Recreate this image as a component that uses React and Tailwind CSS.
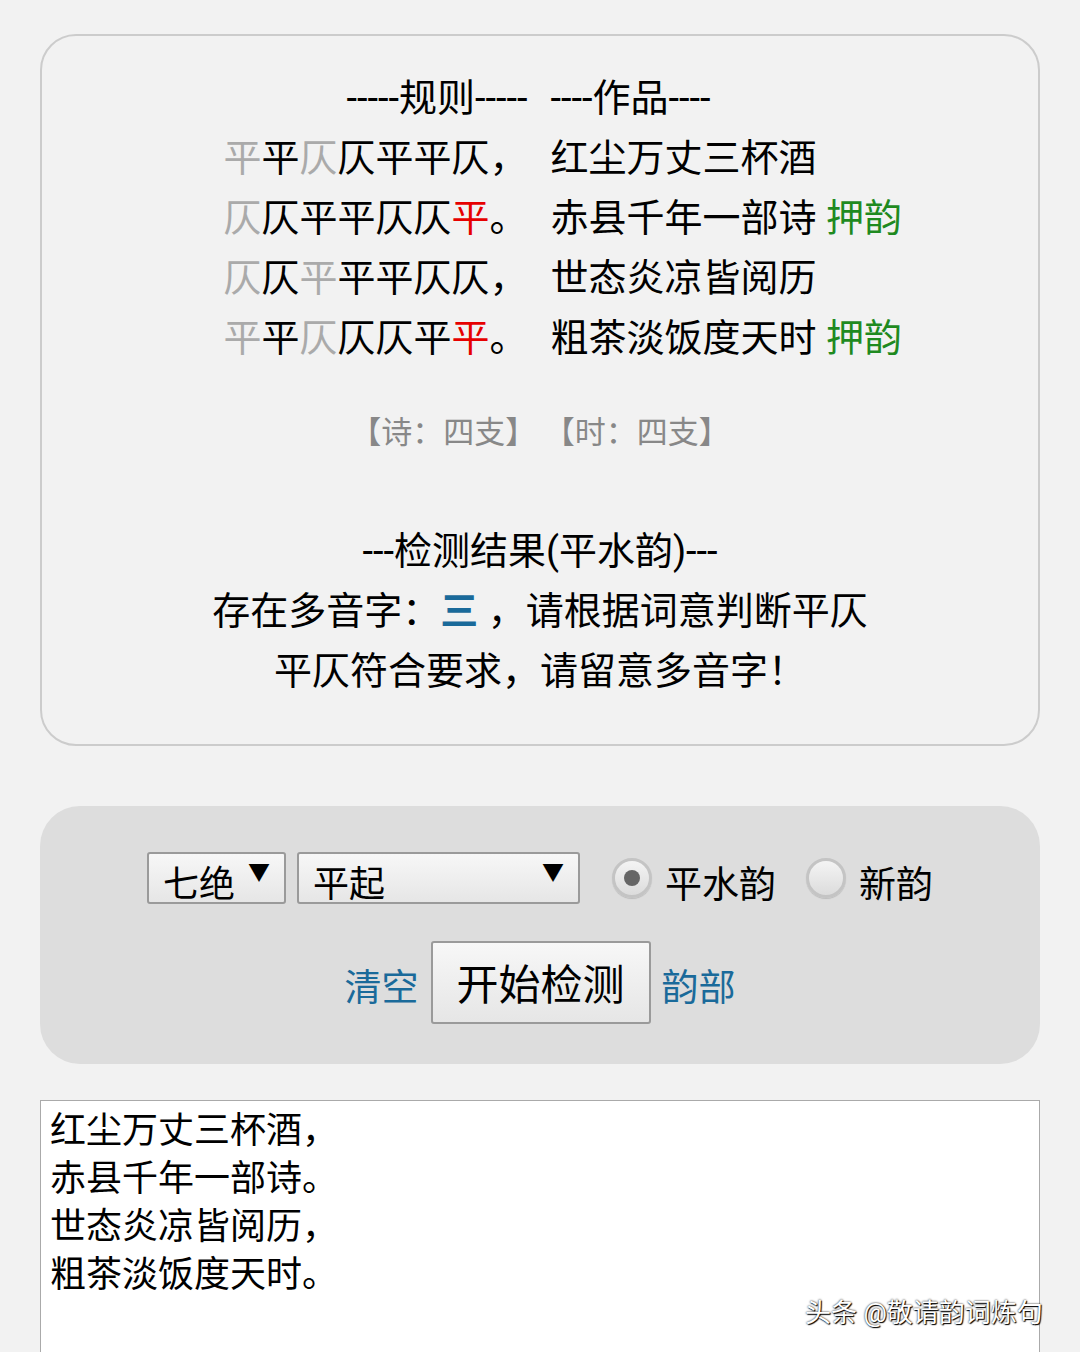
const cjk = { fontFamily: 'Roboto, "Noto Sans CJK SC", sans-serif' };

const G = 'text-[#aaaaaa]';
const R = 'text-[#e60000]';

const rules = [
  [['平', G], ['平'], ['仄', G], ['仄'], ['平'], ['平'], ['仄'], ['，']],
  [['仄', G], ['仄'], ['平'], ['平'], ['仄'], ['仄'], ['平', R], ['。']],
  [['仄', G], ['仄'], ['平', G], ['平'], ['平'], ['仄'], ['仄'], ['，']],
  [['平', G], ['平'], ['仄', G], ['仄'], ['仄'], ['平'], ['平', R], ['。']],
];

const works = [
  ['红尘万丈三杯酒', false],
  ['赤县千年一部诗', true],
  ['世态炎凉皆阅历', false],
  ['粗茶淡饭度天时', true],
];

function FakeSelect({ label, width }) {
  return (
    <div
      className={`flex h-[52px] ${width} items-start justify-between rounded-[3px] border-2 border-[#9a9a9a] bg-gradient-to-b from-[#f7f7f7] to-[#e6e6e6] pl-[14px] pr-[14px] text-[36px] leading-[62px] text-black`}
    >
      <span>{label}</span>
      <span className="mt-[4px] text-[22px] leading-[30px]">▼</span>
    </div>
  );
}

function Radio({ checked }) {
  return (
    <div className="flex h-[40px] w-[40px] items-center justify-center rounded-full border-[3px] border-[#c4c4c4] bg-gradient-to-b from-[#f4f4f4] to-[#dcdcdc] shadow-[0_1px_1px_rgba(0,0,0,0.15)]">
      {checked ? <div className="h-[16px] w-[16px] rounded-full bg-[#666666]" /> : null}
    </div>
  );
}

export default function App() {
  return (
    <div className="relative h-[1352px] overflow-hidden bg-[#f2f2f2] pt-[34px] text-black" style={cjk}>
      <section className="mx-[40px] rounded-[36px] border-2 border-[#cccccc] bg-[#f2f2f2] pb-[43px] pt-[32px] text-[38px] leading-[60px]">
        <div className="flex justify-center pl-[48px]">
          <div className="grid grid-cols-[304px_354px] gap-x-[23px] whitespace-nowrap">
            <div className="text-right">-----规则-----</div>
            <div>----作品----</div>
            {rules.map((row, i) => (
              <>
                <div key={`r${i}`} className="whitespace-nowrap text-left">
                  {row.map(([ch, c], j) => (
                    <span key={j} className={c || ''}>{ch}</span>
                  ))}
                </div>
                <div key={`w${i}`} className="whitespace-nowrap">
                  {works[i][0]}
                  {works[i][1] ? <span className="text-[#1f8a1f]"> 押韵</span> : null}
                </div>
              </>
            ))}
          </div>
        </div>

        <div className="mt-[35px] text-center text-[31px] text-[#888888]">
          【诗：四支】 【时：四支】
        </div>

        <div className="mt-[58px] text-center">
          <div>---检测结果(平水韵)---</div>
          <div>
            存在多音字：<span className="font-bold text-[#1a6a9a]">三</span> ，请根据词意判断平仄
          </div>
          <div>平仄符合要求，请留意多音字！</div>
        </div>
      </section>

      <section className="mx-[40px] mt-[60px] rounded-[40px] bg-[#dddddd] pb-[40px] pt-[46px]">
        <div className="flex h-[52px] items-center justify-center">
          <FakeSelect label="七绝" width="w-[139px]" />
          <div className="ml-[11px]">
            <FakeSelect label="平起" width="w-[283px]" />
          </div>
          <div className="ml-[32px] flex items-center">
            <Radio checked />
            <span className="relative top-[8px] ml-[13px] text-[37px] leading-[52px]">平水韵</span>
          </div>
          <div className="ml-[30px] flex items-center">
            <Radio />
            <span className="relative top-[8px] ml-[13px] text-[37px] leading-[52px]">新韵</span>
          </div>
        </div>

        <div className="mt-[37px] flex h-[83px] items-center justify-center">
          <span className="relative top-[6px] text-[37px] leading-[50px] text-[#1a6a9a]">清空</span>
          <button
            type="button"
            className="ml-[12px] h-[83px] w-[220px] rounded-[3px] border-2 border-[#9a9a9a] bg-gradient-to-b from-[#f7f7f7] to-[#e6e6e6] pt-[6px] text-[42px] leading-[72px] text-black"
            style={cjk}
          >
            开始检测
          </button>
          <span className="relative top-[6px] ml-[11px] text-[37px] leading-[50px] text-[#1a6a9a]">韵部</span>
        </div>
      </section>

      <div className="mx-[40px] mt-[36px] h-[300px] border border-[#aaaaaa] border-b-0 bg-white pl-[9px] pt-[6px] text-[36px] leading-[48px]">
        <div>红尘万丈三杯酒，</div>
        <div>赤县千年一部诗。</div>
        <div>世态炎凉皆阅历，</div>
        <div>粗茶淡饭度天时。</div>
      </div>

      <div className="absolute left-[805px] top-[1294px] text-[26px] leading-[38px] text-white [text-shadow:0_0_2px_#000,1px_1px_1px_#000]">
        头条 @敬请韵词炼句
      </div>
    </div>
  );
}
